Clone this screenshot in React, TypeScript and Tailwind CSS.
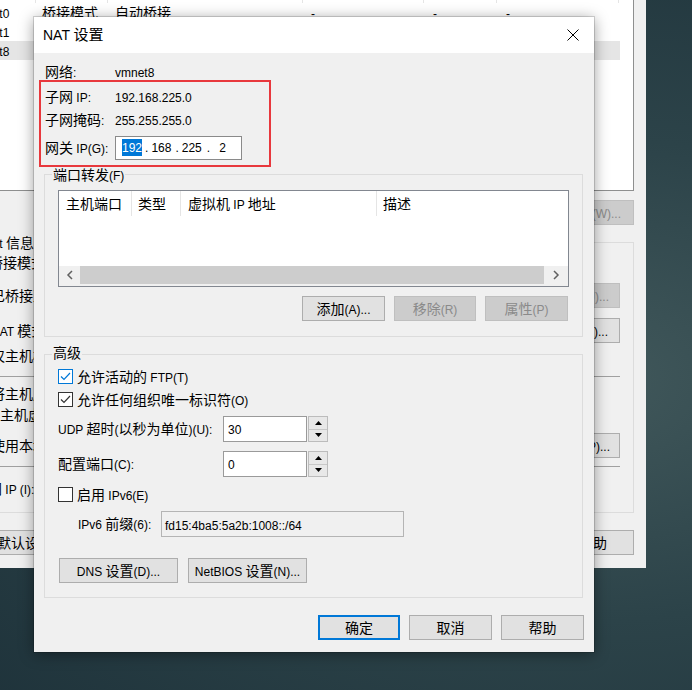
import React from "react";

const RE = /([\u2E80-\u9FFF\u3000-\u303F\uFF00-\uFFEF]+)/;

function T({ s, c = "text-[14px]", l = "text-[12px]" }: { s: string; c?: string; l?: string }) {
  const parts = s.split(RE).filter((p) => p.length > 0);
  return (
    <span className="whitespace-pre leading-none">
      {parts.map((p, i) => (
        <span key={i} className={RE.test(p) ? c : l}>
          {p}
        </span>
      ))}
    </span>
  );
}

function Btn({
  s,
  className = "",
  disabled = false,
  primary = false,
  justify = "justify-center",
}: {
  s: string;
  className?: string;
  disabled?: boolean;
  primary?: boolean;
  justify?: string;
}) {
  const border = primary
    ? "border-2 border-[#0078d7]"
    : disabled
    ? "border border-[#bfbfbf]"
    : "border border-[#adadad]";
  const color = disabled ? "bg-[#cccccc] text-[#8a8a8a]" : "bg-[#e1e1e1] text-black";
  return (
    <div className={`flex h-[25px] shrink-0 items-center overflow-hidden ${justify} ${border} ${color} ${className}`}>
      <T s={s} />
    </div>
  );
}

function Check({ checked = false, blue = false }: { checked?: boolean; blue?: boolean }) {
  const col = blue ? "#0078d7" : "#333333";
  return (
    <div
      className={`flex h-[15px] w-[15px] shrink-0 items-center justify-center border bg-white ${
        blue ? "border-[#0078d7]" : "border-[#333333]"
      }`}
    >
      {checked && (
        <svg width="13" height="13" viewBox="0 0 13 13">
          <path d="M2 6.5 L5 9.5 L11 3" fill="none" stroke={col} strokeWidth="1.2" />
        </svg>
      )}
    </div>
  );
}

function Spin({ v }: { v: string }) {
  return (
    <div className="flex h-[26px]">
      <div className="flex w-[84px] items-center border border-[#9a9a9a] bg-white pl-[4px]">
        <T s={v} />
      </div>
      <div className="ml-px flex w-[20px] flex-col border border-[#bcbcbc] bg-[#e8e8e8]">
        <div className="flex flex-1 items-center justify-center border-b border-[#c8c8c8]">
          <svg width="7" height="4" viewBox="0 0 7 4">
            <path d="M0 4 L3.5 0 L7 4Z" fill="#000" />
          </svg>
        </div>
        <div className="flex flex-1 items-center justify-center">
          <svg width="7" height="4" viewBox="0 0 7 4">
            <path d="M0 0 L3.5 4 L7 0Z" fill="#000" />
          </svg>
        </div>
      </div>
    </div>
  );
}

const colW = ["w-[76px]", "w-[72px]", "w-[195px]", "w-[121px]", "w-[73px]", "w-[122px]"];
const colP = ["pl-[8px]", "pl-[6px]", "pl-[7px]", "pl-[8px]", "pl-[9px]", "pl-[9px]"];
const rows = [
  ["VMnet0", "桥接模式", "自动桥接", "-", "-", "-"],
  ["VMnet1", "仅主机模式", "-", "已连接", "已启用", "-"],
  ["VMnet8", "NAT 模式", "NAT 模式", "已连接", "已启用", "-"],
];

function BgWindow() {
  return (
    <div className="absolute left-[-40px] top-0 flex h-[568px] w-[686px] flex-col bg-[#f0f0f0]">
      <div className="h-[191px] w-[674px] shrink-0 border-b border-r border-[#8e8f8f] bg-white">
        <div className="flex h-[3px]">
          {colW.map((w, i) => (
            <div key={i} className={`${w} border-r border-[#e5e5e5]`} />
          ))}
        </div>
        {rows.map((r, ri) => (
          <div key={ri} className={`flex h-[19px] w-[660px] items-center ${ri === 2 ? "bg-[#e5e5e5]" : ""}`}>
            {r.map((cell, ci) => (
              <div key={ci} className={`${colW[ci]} ${colP[ci]} flex h-full items-center overflow-hidden`}>
                <T s={cell} />
              </div>
            ))}
          </div>
        ))}
      </div>

      <div className="mt-[9px] flex h-[25px] justify-end pr-[12px]">
        <Btn disabled s="更改设置(W)..." className="w-[120px]" justify="justify-end pr-[12px]" />
      </div>

      <div className="relative ml-[2px] mr-[12px] mt-[17px] flex h-[271px] flex-col border border-[#dcdcdc] pl-[28px] pr-[13px]">
        <div className="absolute -top-[11px] left-[4px] flex h-[22px] items-center bg-[#f0f0f0] px-px">
          <T s="VMnet 信息" />
        </div>
        <div className="mt-[9px] flex h-[22px] items-center -ml-[2px]">
          <T s="桥接模式(将虚拟机直接连接到外部网络)(B)" />
        </div>
        <div className="mt-[9px] flex h-[25px] items-center justify-between">
          <T s="已桥接至(G):" />
          <Btn disabled s="自动设置(U)..." className="w-[100px]" justify="justify-end pr-[10px]" />
        </div>
        <div className="mt-[10px] flex h-[25px] items-center justify-between">
          <T s="NAT 模式(与虚拟机共享主机的 IP 地址)(N)" />
          <Btn s="NAT 设置(S)..." className="w-[100px]" justify="justify-end pr-[11px]" />
        </div>
        <div className="mt-[2px] flex h-[22px] items-center">
          <T s="仅主机模式(在专用网络内连接虚拟机)(H)" />
        </div>
        <div className="mt-[9px] h-px bg-[#a0a0a0]" />
        <div className="mt-[6px] flex h-[21px] items-center">
          <T s="将主机虚拟适配器连接到此网络(V)" />
        </div>
        <div className="flex h-[21px] items-center pl-[9px]">
          <T s="主机虚拟适配器名称: VMware 网络适配器 VMnet8" />
        </div>
        <div className="mt-[8px] flex h-[25px] items-center justify-between">
          <T s="使用本地 DHCP 服务将 IP 地址分配给虚拟机(D)" />
          <Btn s="DHCP 设置(P)..." className="w-[100px]" justify="justify-end pr-[9px]" />
        </div>
        <div className="mt-[8px] h-px bg-[#a0a0a0]" />
        <div className="mt-[11px] flex h-[22px] items-center -ml-[17px]">
          <T s="子网 IP (I): 192.168.225.0" />
        </div>
      </div>

      <div className="mt-[17px] flex h-[25px] justify-between pl-[8px] pr-[12px]">
        <Btn s="默认设置(R)" className="w-[120px]" justify="justify-start pl-[28px]" />
        <Btn s="帮助" className="w-[82px]" />
      </div>
    </div>
  );
}

function Dialog() {
  return (
    <div className="absolute left-[34px] top-[17px] flex w-[560px] flex-col bg-[#f0f0f0] shadow-[0_0_0_1px_rgba(0,0,0,0.15),0_2px_14px_rgba(0,0,0,0.4)]">
      <div className="flex h-[36px] items-center justify-between bg-white pl-[9px] pr-[15px]">
        <T s="NAT 设置" c="text-[15px]" l="text-[14px]" />
        <svg width="12" height="12" viewBox="0 0 12 12">
          <path d="M0.5 0.5 L11.5 11.5 M11.5 0.5 L0.5 11.5" stroke="#000" strokeWidth="1" />
        </svg>
      </div>

      <div className="flex flex-col pb-[12px]">
        <div className="mt-[8px] flex h-[22px] items-center pl-[11px]">
          <div className="w-[70px]">
            <T s="网络:" />
          </div>
          <T s="vmnet8" />
        </div>
        <div className="mt-[3px] flex h-[22px] items-center pl-[11px]">
          <div className="w-[70px]">
            <T s="子网 IP:" />
          </div>
          <T s="192.168.225.0" />
        </div>
        <div className="mt-[1px] flex h-[22px] items-center pl-[11px]">
          <div className="w-[70px]">
            <T s="子网掩码:" />
          </div>
          <T s="255.255.255.0" />
        </div>
        <div className="mt-[4px] flex h-[25px] items-center pl-[11px]">
          <div className="w-[70px]">
            <T s="网关 IP(G):" />
          </div>
          <div className="flex h-[24px] w-[127px] items-center border border-[#8a8a8a] bg-white text-[12px] leading-none">
            <span className="ml-[6px] flex h-[17px] items-center bg-[#0078d7] text-white">192</span>
            <span className="ml-[3px]">.</span>
            <span className="ml-[3px]">168</span>
            <span className="ml-[4px]">.</span>
            <span className="ml-[3px]">225</span>
            <span className="ml-[5px]">.</span>
            <span className="ml-[9px]">2</span>
          </div>
        </div>

        <div className="relative ml-[10px] mr-[11px] mt-[14px] h-[163px] border border-[#dcdcdc] px-[13px] pt-[15px]">
          <div className="absolute -top-[10px] left-[7px] flex h-[20px] items-center bg-[#f0f0f0] px-px">
            <T s="端口转发(F)" />
          </div>
          <div className="flex h-[97px] flex-col border border-[#828790] bg-white">
            <div className="flex h-[25px]">
              <div className="flex w-[73px] items-center border-r border-[#e5e5e5] pl-[7px]">
                <T s="主机端口" />
              </div>
              <div className="flex w-[49px] items-center border-r border-[#e5e5e5] pl-[6px]">
                <T s="类型" />
              </div>
              <div className="flex w-[196px] items-center border-r border-[#e5e5e5] pl-[7px]">
                <T s="虚拟机 IP 地址" />
              </div>
              <div className="flex flex-1 items-center pl-[6px]">
                <T s="描述" />
              </div>
            </div>
            <div className="flex-1" />
            <div className="flex h-[20px] items-start bg-[#f0f0f0]">
              <div className="flex h-[18px] w-[21px] items-center justify-center">
                <svg width="8" height="10" viewBox="0 0 8 10">
                  <path d="M6 1 L2 5 L6 9" fill="none" stroke="#606060" strokeWidth="1.5" />
                </svg>
              </div>
              <div className="h-[18px] flex-1 bg-[#cdcdcd]" />
              <div className="flex h-[18px] w-[24px] items-center justify-center">
                <svg width="8" height="10" viewBox="0 0 8 10">
                  <path d="M2 1 L6 5 L2 9" fill="none" stroke="#606060" strokeWidth="1.5" />
                </svg>
              </div>
            </div>
          </div>
          <div className="mt-[9px] flex justify-end gap-[9px] pr-px">
            <Btn s="添加(A)..." className="w-[83px]" />
            <Btn disabled s="移除(R)" className="w-[82px]" />
            <Btn disabled s="属性(P)" className="w-[83px]" />
          </div>
        </div>

        <div className="relative ml-[10px] mr-[11px] mt-[17px] flex h-[244px] flex-col border border-[#dcdcdc] pl-[13px] pt-[11px]">
          <div className="absolute -top-[12px] left-[7px] flex h-[20px] items-center bg-[#f0f0f0] px-px">
            <T s="高级" />
          </div>
          <div className="flex h-[21px] items-center gap-[4px]">
            <Check checked blue />
            <T s="允许活动的 FTP(T)" />
          </div>
          <div className="mt-[2px] flex h-[21px] items-center gap-[4px]">
            <Check checked />
            <T s="允许任何组织唯一标识符(O)" />
          </div>
          <div className="mt-[6px] flex h-[26px] items-center">
            <div className="w-[165px]">
              <T s="UDP 超时(以秒为单位)(U):" />
            </div>
            <Spin v="30" />
          </div>
          <div className="mt-[9px] flex h-[26px] items-center">
            <div className="w-[165px]">
              <T s="配置端口(C):" />
            </div>
            <Spin v="0" />
          </div>
          <div className="mt-[7px] flex h-[21px] items-center gap-[4px]">
            <Check />
            <T s="启用 IPv6(E)" />
          </div>
          <div className="mt-[6px] flex h-[26px] items-center pl-[20px]">
            <div className="w-[83px]">
              <T s="IPv6 前缀(6):" />
            </div>
            <div className="flex h-[26px] w-[243px] items-start border border-[#b4b4b4] bg-[#f0f0f0] pl-[3px] pt-[5px]">
              <T s="fd15:4ba5:5a2b:1008::/64" />
            </div>
          </div>
          <div className="mt-[21px] flex h-[25px] gap-[10px] pl-px">
            <Btn s="DNS 设置(D)..." className="w-[119px]" />
            <Btn s="NetBIOS 设置(N)..." className="w-[119px]" />
          </div>
        </div>

        <div className="mt-[17px] flex h-[25px] justify-end gap-[9px] pr-[10px]">
          <Btn primary s="确定" className="w-[82px]" />
          <Btn s="取消" className="w-[83px]" />
          <Btn s="帮助" className="w-[83px]" />
        </div>
      </div>

      <div className="pointer-events-none absolute left-[5px] top-[63px] h-[87px] w-[232px] border-2 border-[#e8383d]" />
    </div>
  );
}

export default function App() {
  return (
    <div className="relative h-[690px] w-[692px] overflow-hidden bg-[radial-gradient(ellipse_at_85%_55%,#41585b_0%,#2c4349_45%,#1d3139_100%)] text-black [font-family:'Liberation_Sans','Noto_Sans_CJK_SC',sans-serif]">
      <BgWindow />
      <Dialog />
    </div>
  );
}
